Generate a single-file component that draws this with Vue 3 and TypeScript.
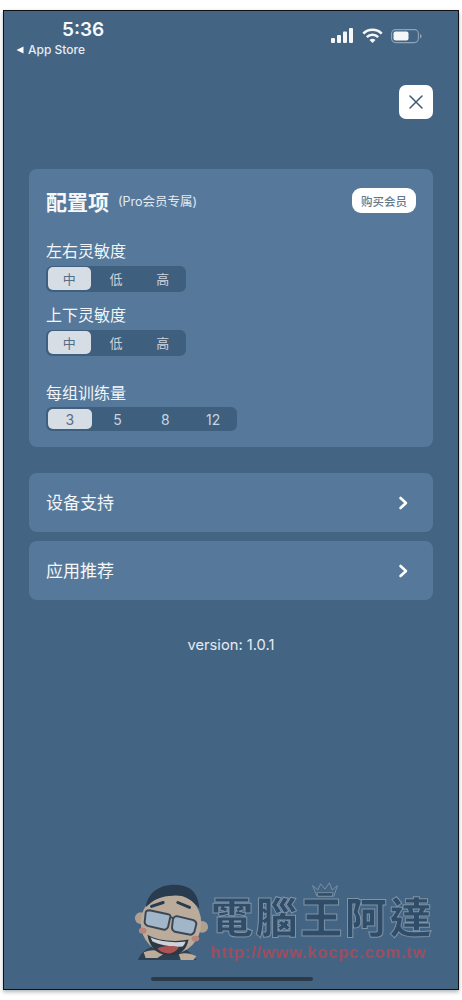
<script setup lang="ts">
const sensitivity = ["中", "低", "高"];
const groups = ["3", "5", "8", "12"];

const settings = [
  { label: "左右灵敏度", options: sensitivity, cls: "seg-short" },
  { label: "上下灵敏度", options: sensitivity, cls: "seg-short" },
  { label: "每组训练量", options: groups, cls: "seg-long" },
];

const links = ["设备支持", "应用推荐"];
</script>

<template>
  <div class="page">
    <div class="phone">
      <div class="status">
        <div class="status-left">
          <div class="time">5:36</div>
          <div class="back">
            <svg width="8" height="8" viewBox="0 0 8 8"><path d="M7.5 .6v6.8L.5 4z" fill="#fff" /></svg>
            App Store
          </div>
        </div>
        <div class="status-right">
          <svg width="23" height="16" viewBox="0 0 23 16" fill="#f4f6f8">
            <rect x="0" y="10" width="4" height="5" rx="1" />
            <rect x="6" y="7" width="4" height="8" rx="1" />
            <rect x="12" y="3.500" width="4" height="11.500" rx="1" />
            <rect x="18" y="0" width="4" height="15" rx="1" />
          </svg>
          <svg width="21" height="16" viewBox="0 0 21 16" fill="none" stroke="#f4f6f8" stroke-width="2.600">
            <path d="M1.300 5.600a13 13 0 0 1 18.400 0" />
            <path d="M4.800 9.200a8 8 0 0 1 11.400 0" />
            <path d="M10.500 15l-3-3a4.200 4.200 0 0 1 6 0z" fill="#f4f6f8" stroke="none" />
          </svg>
          <svg width="31" height="16" viewBox="0 0 31 16" fill="none">
            <rect x=".6" y="1.600" width="26.800" height="13" rx="4" stroke="#8fa4b8" stroke-width="1.100" />
            <rect x="2.500" y="3.500" width="15" height="9" rx="2" fill="#f4f6f8" />
            <path d="M29 6v4.500c1-.3 1.600-1.200 1.600-2.200S30 6.300 29 6z" fill="#8fa4b8" />
          </svg>
        </div>
      </div>

      <div class="close-row">
        <button class="close">
          <svg width="16" height="16" viewBox="0 0 16 16" stroke="#3f5a75" stroke-width="1.500" stroke-linecap="round">
            <path d="M2 2l12 12M14 2L2 14" />
          </svg>
        </button>
      </div>

      <section class="card settings">
        <div class="head">
          <h2>配置项</h2>
          <span class="pro">(Pro会员专属)</span>
          <button class="buy">购买会员</button>
        </div>
        <div v-for="item in settings" :key="item.label" class="setting" :class="item.cls">
          <div class="label">{{ item.label }}</div>
          <div class="seg">
            <span v-for="(opt, i) in item.options" :key="opt" class="opt" :class="{ on: i === 0 }">{{ opt }}</span>
          </div>
        </div>
      </section>

      <div class="links">
        <a v-for="link in links" :key="link" class="card link">
          <span>{{ link }}</span>
          <svg width="10" height="14" viewBox="0 0 10 14" fill="none" stroke="#fff" stroke-width="2.600" stroke-linecap="round" stroke-linejoin="round">
            <path d="M2.500 2L8 7l-5.500 5" />
          </svg>
        </a>
      </div>

      <div class="version">version: 1.0.1</div>

      <div class="home"></div>

      <!-- 水印 -->
      <div class="mark">
        <svg class="face" width="76" height="80" viewBox="0 0 76 82">
          <path d="M4 80c3-9 12-15 24-15h12c10 0 18 6 24 15z" fill="#2c3f52" />
          <path d="M10 72c8-3 14-3 20 2l-6 4H12z" fill="#c7b49e" />
          <path d="M46 74c6-2 12-1 18 2l-3 4H48z" fill="#c7b49e" />
          <circle cx="7" cy="37" r="6" fill="#b9a792" />
          <circle cx="70" cy="46" r="6" fill="#b9a792" />
          <ellipse cx="38" cy="42" rx="31" ry="32" fill="#c4b29c" />
          <path d="M12 26C14 10 28 1 46 3c12 1 20 8 21 24-8-9-15-14-27-13-12 0-20 4-28 12z" fill="#26384b" />
          <path d="M18 25l12-4M45 21l12 5" stroke="#26384b" stroke-width="3" stroke-linecap="round" />
          <path d="M16 29l19 4c2 0 3 2 2 4l-2 9c-1 2-2 3-4 3l-17-4c-2-1-3-2-3-4l1-9c0-2 2-3 4-3z" fill="#a9bdce" stroke="#3a4653" stroke-width="2" />
          <path d="M44 35l17 4c2 1 3 2 3 4l-2 8c-1 2-2 3-4 3l-16-3c-2-1-3-2-3-4l1-9c1-2 2-3 4-3z" fill="#a9bdce" stroke="#3a4653" stroke-width="2" />
          <path d="M37 36l4 1" stroke="#3a4653" stroke-width="2" />
          <path d="M14 54c10 6 28 8 42 5-2 12-11 18-22 16-11-1-19-10-20-21z" fill="#2c3540" />
          <path d="M17 57c10 4 24 6 36 4-1 3-2 4-3 5-11 1-22-1-31-5z" fill="#d9dde0" />
          <path d="M24 68c7-3 15-3 22-1-3 5-8 7-12 6-4 0-8-2-10-5z" fill="#b5534f" />
          <ellipse cx="9" cy="50" rx="4" ry="3" fill="#c08a7a" />
          <ellipse cx="63" cy="58" rx="4" ry="3" fill="#c08a7a" />
        </svg>
        <div class="brand">
          <svg class="crown" width="32" height="16" viewBox="0 0 32 18" fill="none" stroke="#8497a9" stroke-width="1">
            <path d="M2 4l6 5 3-7 5 6 5-7 3 8 6-5-4 12H7z" />
            <path d="M7 12h18l-1 4H8z" fill="#2e4a66" />
          </svg>
          <div class="zh">電腦王阿達</div>
          <div class="url">http://www.kocpc.com.tw</div>
        </div>
      </div>
    </div>
  </div>
</template>

<style>
body {
  margin: 0;
  background: #fff;
}
</style>

<style scoped>
.page {
  height: 1000px;
  box-sizing: border-box;
  padding: 10px 3px;
  font-family: "Inter", "Noto Sans CJK SC", sans-serif;
  background: #fff;
}

.phone {
  position: relative;
  height: 980px;
  box-sizing: border-box;
  border: 1px solid #111;
  background: #446484;
  padding: 0 25px;
  color: #fff;
  overflow: hidden;
  box-shadow: 0 2px 4px rgba(0, 0, 0, .3);
}

.status {
  display: flex;
  justify-content: space-between;
  margin: 0 -25px;
  padding: 7px 36px 0 12px;
  height: 74px;
  box-sizing: border-box;
}

.time {
  font-size: 19px;
  font-weight: 600;
  line-height: 24px;
  padding-left: 46px;
  color: #f6f8fa;
}

.back {
  display: flex;
  align-items: center;
  gap: 4px;
  font-size: 12px;
  line-height: 15px;
  font-weight: 500;
  color: #e8edf2;
}

.status-right {
  display: flex;
  align-items: flex-start;
  gap: 8px;
  padding-top: 10px;
}

.close-row {
  display: flex;
  justify-content: flex-end;
}

.close {
  width: 34px;
  height: 34px;
  border: 0;
  border-radius: 7px;
  padding: 0;
  background: #fff;
  display: flex;
  align-items: center;
  justify-content: center;
}

.card {
  background: #56799b;
  border-radius: 8px;
}

.settings {
  margin-top: 50px;
  height: 278px;
  box-sizing: border-box;
  padding: 18px 17px 0;
}

.head {
  display: flex;
  align-items: center;
  height: 27px;
  margin-bottom: 26px;
}

h2 {
  margin: 0;
  font-size: 21px;
  font-weight: 700;
  color: #f6f8fa;
}

.pro {
  margin-left: 9px;
  font-size: 12.500px;
  color: #e4eaf0;
}

.buy {
  margin-left: auto;
  width: 64px;
  height: 25px;
  border: 0;
  padding: 0;
  border-radius: 9px;
  background: #fff;
  color: #66788a;
  font: 500 11.500px "Noto Sans CJK SC", sans-serif;
}

.setting {
  margin-bottom: 12px;
}

.seg-long {
  margin-top: 26px;
}

.label {
  font-size: 16px;
  line-height: 22px;
  color: #f2f5f8;
  margin-bottom: 4px;
}

.seg-long .label {
  margin-bottom: 3px;
}

.seg {
  display: flex;
  width: 140px;
  height: 26px;
  box-sizing: border-box;
  padding: 1px 0 2px;
  border-radius: 6px;
  background: #3f5f7f;
}

.seg-long .seg {
  width: 191px;
  height: 24px;
  padding: 2px 0;
}

.opt {
  flex: 1;
  display: flex;
  align-items: center;
  justify-content: center;
  font-size: 13px;
  color: #c9d4df;
  border-radius: 5px;
  margin: 0 2px;
}

.seg-long .opt {
  font-size: 14px;
}

.opt.on {
  background: #d6dde5;
  color: #566e85;
}

.links {
  margin-top: 26px;
  display: flex;
  flex-direction: column;
  gap: 9px;
}

.link {
  height: 59px;
  display: flex;
  align-items: center;
  justify-content: space-between;
  padding: 0 25px 0 17px;
  font-size: 17px;
  color: #f4f6f8;
}

.link span {
  margin-top: -2px;
}

.version {
  margin-top: 35px;
  text-align: center;
  font-size: 14.700px;
  line-height: 20px;
  color: #e6ebf0;
}

.home {
  position: absolute;
  left: 147px;
  bottom: 8px;
  width: 162px;
  height: 4px;
  border-radius: 2px;
  background: #2c3a48;
}

/* 水印压在页面上 */
.mark {
  position: absolute;
  left: 129px;
  top: 871px;
  display: flex;
  align-items: flex-start;
  opacity: .92;
  filter: blur(.4px);
}

.brand {
  position: relative;
  margin-left: 2px;
  padding-top: 12px;
}

.crown {
  position: absolute;
  left: 98px;
  top: 0;
}

.zh {
  font: 900 42px/42px "Noto Sans CJK TC", sans-serif;
  letter-spacing: 2.600px;
  color: #2e4a66;
  -webkit-text-stroke: 1px #8497a9;
  white-space: nowrap;
}

.url {
  margin-top: 7px;
  font: 700 16.500px/18px "Liberation Sans", sans-serif;
  letter-spacing: .8px;
  color: #a84c5e;
  white-space: nowrap;
}
</style>
